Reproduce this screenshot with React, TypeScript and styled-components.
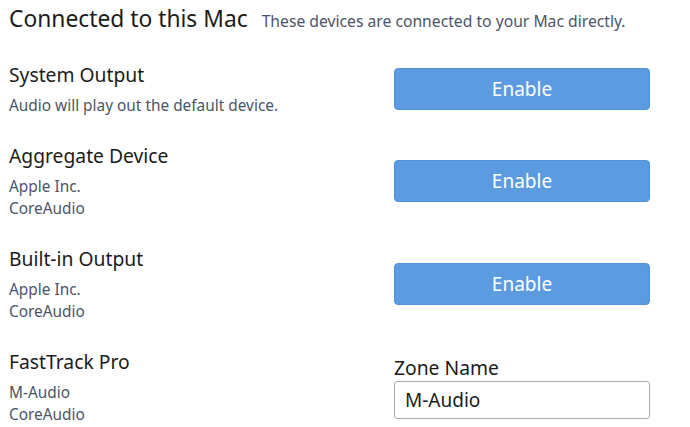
import React from "react";
import styled, { createGlobalStyle } from "styled-components";

const GlobalStyle = createGlobalStyle`
  body {
    margin: 0;
    background: #ffffff;
    font-family: "Noto Sans", "Open Sans", sans-serif;
    color: #1b1b1b;
  }
`;

const Page = styled.div`
  width: 690px;
  height: 427px;
  overflow: hidden;
  box-sizing: border-box;
  padding: 3px 40px 0 9px;
`;

const Header = styled.div`
  display: flex;
  align-items: baseline;
  gap: 14px;
  margin-bottom: 27.5px;
`;

const Title = styled.h1`
  margin: 0;
  font-size: 22.8px;
  font-weight: 400;
  color: #1b1b1b;
`;

const Subtitle = styled.span`
  font-size: 15.7px;
  color: #4a5568;
`;

const DeviceList = styled.div`
  display: flex;
  flex-direction: column;
  gap: 26px;
`;

const DeviceRow = styled.div`
  display: flex;
  align-items: center;
  justify-content: space-between;
`;

const DeviceInfo = styled.div`
  display: flex;
  flex-direction: column;
`;

const DeviceName = styled.div`
  font-size: 19.3px;
  line-height: 26px;
  margin-bottom: 7px;
`;

const DeviceDetail = styled.div`
  font-size: 15.4px;
  line-height: 22px;
  color: #4a5568;
`;

const Control = styled.div`
  width: 256px;
  display: flex;
  flex-direction: column;
`;

const EnableButton = styled.button`
  height: 42px;
  width: 100%;
  border: 1px solid #4f92dc;
  border-radius: 4px;
  background: #5c9be0;
  color: #ffffff;
  font-family: inherit;
  font-size: 19px;
`;

const FieldLabel = styled.label`
  font-size: 19.3px;
  line-height: 26px;
  color: #1b1b1b;
`;

const TextInput = styled.input`
  height: 38px;
  box-sizing: border-box;
  width: 100%;
  border: 1px solid #a5acb8;
  border-radius: 3px;
  padding: 0 10px;
  font-family: inherit;
  font-size: 19px;
  color: #1b1b1b;
`;

type Device = {
  name: string;
  details: string[];
  zone?: string;
};

const devices: Device[] = [
  { name: "System Output", details: ["Audio will play out the default device."] },
  { name: "Aggregate Device", details: ["Apple Inc.", "CoreAudio"] },
  { name: "Built-in Output", details: ["Apple Inc.", "CoreAudio"] },
  { name: "FastTrack Pro", details: ["M-Audio", "CoreAudio"], zone: "M-Audio" },
];

export default function App() {
  return (
    <>
      <GlobalStyle />
      <Page>
        <Header>
          <Title>Connected to this Mac</Title>
          <Subtitle>These devices are connected to your Mac directly.</Subtitle>
        </Header>
        <DeviceList>
          {devices.map((d) => (
            <DeviceRow key={d.name}>
              <DeviceInfo>
                <DeviceName>{d.name}</DeviceName>
                {d.details.map((line) => (
                  <DeviceDetail key={line}>{line}</DeviceDetail>
                ))}
              </DeviceInfo>
              <Control>
                {d.zone ? (
                  <>
                    <FieldLabel>Zone Name</FieldLabel>
                    <TextInput defaultValue={d.zone} />
                  </>
                ) : (
                  <EnableButton>Enable</EnableButton>
                )}
              </Control>
            </DeviceRow>
          ))}
        </DeviceList>
      </Page>
    </>
  );
}
